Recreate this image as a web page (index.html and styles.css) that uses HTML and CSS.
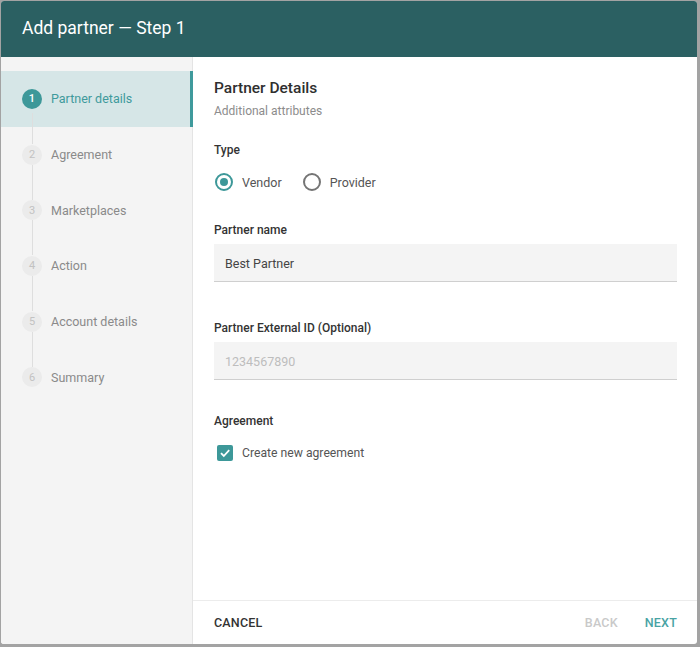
FILE: index.html
```html
<!DOCTYPE html>
<html>
<head>
<meta charset="utf-8">
<link rel="stylesheet" href="styles.css">
</head>
<body>
<div class="dialog">
  <header class="dlg-header">Add partner — Step 1</header>
  <div class="dlg-body">
    <nav class="steps">
      <div class="step active"><span class="num">1</span><span class="label">Partner details</span></div>
      <div class="step"><span class="num">2</span><span class="label">Agreement</span></div>
      <div class="step"><span class="num">3</span><span class="label">Marketplaces</span></div>
      <div class="step"><span class="num">4</span><span class="label">Action</span></div>
      <div class="step"><span class="num">5</span><span class="label">Account details</span></div>
      <div class="step last"><span class="num">6</span><span class="label">Summary</span></div>
    </nav>
    <main class="content">
      <div class="form">
        <h2 class="title">Partner Details</h2>
        <p class="subtitle">Additional attributes</p>

        <div class="field-label type-label">Type</div>
        <div class="radios">
          <label class="radio"><span class="radio-dot checked"></span>Vendor</label>
          <label class="radio"><span class="radio-dot"></span>Provider</label>
        </div>

        <div class="field-label name-label">Partner name</div>
        <div class="input">Best Partner</div>

        <div class="field-label ext-label">Partner External ID (Optional)</div>
        <div class="input placeholder">1234567890</div>

        <div class="field-label agr-label">Agreement</div>
        <label class="check">
          <span class="box"><svg width="12" height="12" viewBox="0 0 12 12"><path d="M2 6.2 L4.8 9 L10.2 3.2" fill="none" stroke="#fff" stroke-width="1.8"/></svg></span>
          Create new agreement
        </label>
      </div>
      <footer class="actions">
        <span class="btn cancel">CANCEL</span>
        <span class="spacer"></span>
        <span class="btn back">BACK</span>
        <span class="btn next">NEXT</span>
      </footer>
    </main>
  </div>
</div>
</body>
</html>
```
FILE: styles.css
```css
* { box-sizing: border-box; }
html, body { margin: 0; padding: 0; }
body {
  background: #a3a3a3;
  width: 700px;
  height: 647px;
  font-family: Roboto, "Liberation Sans", sans-serif;
  padding: 1px 3px 3px 1px;
}
.dialog {
  width: 696px;
  height: 643px;
  background: #fff;
  border-radius: 3px;
  overflow: hidden;
  display: flex;
  flex-direction: column;
}
.dlg-header {
  height: 56px;
  flex: none;
  background: #2b6062;
  color: #fff;
  font-size: 17.5px;
  display: flex;
  align-items: center;
  padding-left: 21px;
  padding-bottom: 2px;
}
.dlg-body {
  flex: 1;
  display: flex;
  min-height: 0;
}
.steps {
  width: 192px;
  flex: none;
  background: #f4f4f4;
  border-right: 1px solid #e4e4e4;
  padding-top: 14px;
}
.step {
  height: 55.7px;
  display: flex;
  align-items: center;
  padding-left: 21px;
  position: relative;
  color: #8a8a8a;
  font-size: 12.5px;
}
.step::after {
  content: "";
  position: absolute;
  left: 31px;
  top: 38px;
  height: 35px;
  width: 1px;
  background: #dedede;
}
.step.last::after { display: none; }
.step.active {
  background: #d6e6e7;
  color: #3f9a9c;
  margin-right: -1px;
  border-right: 3px solid #3f9a9c;
}
.step.active::after { top: 42px; height: 31px; }
.num {
  width: 20px;
  height: 20px;
  border-radius: 50%;
  background: #ebebeb;
  color: #c2c2c2;
  font-size: 11px;
  display: flex;
  align-items: center;
  justify-content: center;
  margin-right: 9px;
}
.step.active .num {
  background: #3d9899;
  color: #fff;
  font-weight: 500;
}
.content {
  flex: 1;
  display: flex;
  flex-direction: column;
  min-width: 0;
}
.form {
  flex: 1;
  padding: 21px 20px 0 21px;
}
.title {
  margin: 0;
  font-size: 15.5px;
  font-weight: 500;
  color: #2f2f2f;
  line-height: 20px;
}
.subtitle {
  margin: 5px 0 0;
  font-size: 12px;
  color: #8c8c8c;
  line-height: 16px;
}
.field-label {
  font-size: 12px;
  font-weight: 500;
  color: #333;
  line-height: 16px;
}
.type-label { margin-top: 23px; }
.radios {
  display: flex;
  gap: 20px;
  margin-top: 15px;
}
.radio {
  display: flex;
  align-items: center;
  font-size: 12.5px;
  color: #555;
}
.radio-dot {
  width: 18px;
  height: 18px;
  border-radius: 50%;
  border: 2px solid #757575;
  margin-right: 9px;
  margin-left: 1px;
  position: relative;
}
.radio-dot.checked {
  border-color: #3d9899;
}
.radio-dot.checked::after {
  content: "";
  position: absolute;
  left: 3px;
  top: 3px;
  width: 8px;
  height: 8px;
  border-radius: 50%;
  background: #3d9899;
}
.name-label { margin-top: 31px; }
.ext-label { margin-top: 38px; }
.agr-label { margin-top: 33px; }
.input {
  margin-top: 6px;
  height: 38px;
  background: #f4f4f4;
  border-bottom: 1px solid #cfcfcf;
  display: flex;
  align-items: center;
  padding-left: 11px;
  padding-top: 2px;
  font-size: 12.5px;
  color: #444;
}
.input.placeholder { color: #bdbdbd; }
.check {
  display: flex;
  align-items: center;
  margin-top: 16px;
  font-size: 12.2px;
  color: #555;
}
.box {
  width: 16px;
  height: 16px;
  border-radius: 2px;
  background: #3d9899;
  margin-left: 3px;
  margin-right: 9px;
  display: flex;
  align-items: center;
  justify-content: center;
}
.actions {
  height: 44px;
  flex: none;
  border-top: 1px solid #ececec;
  display: flex;
  align-items: center;
  padding: 0 20px 0 21px;
}
.spacer { flex: 1; }
.btn {
  font-size: 12.5px;
  font-weight: 500;
  letter-spacing: 0.2px;
}
.cancel { color: #333; }
.back { color: #c9c9c9; margin-right: 27px; }
.next { color: #49a3a4; }
```
